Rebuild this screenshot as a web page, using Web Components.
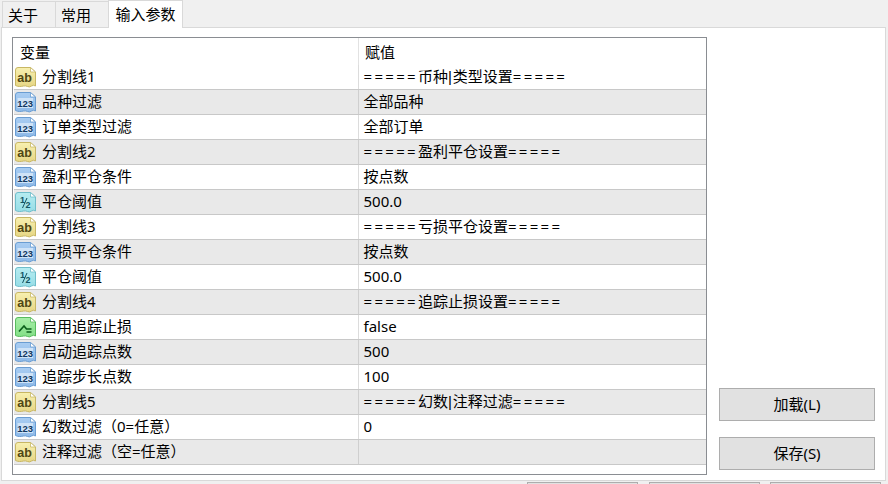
<!DOCTYPE html>
<html lang="zh"><head><meta charset="utf-8">
<style>
html,body{margin:0;padding:0;background:#f0f0f0;overflow:hidden;width:888px;height:484px}
body{font:15px "Noto Sans","Noto Sans CJK SC",sans-serif;color:#000}
</style></head><body>
<param-dialog>
<tab-bar slot="tabs">
<tab-item>关于</tab-item><tab-item>常用</tab-item><tab-item active>输入参数</tab-item>
</tab-bar>
<param-list slot="list">
<param-row kind="ab" name="分割线1" value="=====币种|类型设置====="></param-row>
<param-row kind="num" name="品种过滤" value="全部品种"></param-row>
<param-row kind="num" name="订单类型过滤" value="全部订单"></param-row>
<param-row kind="ab" name="分割线2" value="=====盈利平仓设置====="></param-row>
<param-row kind="num" name="盈利平仓条件" value="按点数"></param-row>
<param-row kind="half" name="平仓阈值" value="500.0"></param-row>
<param-row kind="ab" name="分割线3" value="=====亏损平仓设置====="></param-row>
<param-row kind="num" name="亏损平仓条件" value="按点数"></param-row>
<param-row kind="half" name="平仓阈值" value="500.0"></param-row>
<param-row kind="ab" name="分割线4" value="=====追踪止损设置====="></param-row>
<param-row kind="bool" name="启用追踪止损" value="false"></param-row>
<param-row kind="num" name="启动追踪点数" value="500"></param-row>
<param-row kind="num" name="追踪步长点数" value="100"></param-row>
<param-row kind="ab" name="分割线5" value="=====幻数|注释过滤====="></param-row>
<param-row kind="num" name="幻数过滤（0=任意）" value="0"></param-row>
<param-row kind="ab" name="注释过滤（空=任意）" value=""></param-row>
</param-list>
<ui-button slot="side">加载(L)</ui-button>
<ui-button slot="side">保存(S)</ui-button>
<ui-button slot="foot"></ui-button><ui-button slot="foot"></ui-button><ui-button slot="foot"></ui-button>
</param-dialog>
<script>
function shadow(el,html){el.attachShadow({mode:'open'}).innerHTML=html;}
customElements.define('param-dialog',class extends HTMLElement{constructor(){super();shadow(this,`<style>
:host{display:block;width:888px;height:484px;overflow:hidden}
.tabs{height:27px}
.panel{box-sizing:border-box;width:885px;height:454px;margin-left:1px;background:#fff;border:1px solid #d9d9d9;padding:9px 10px 0 10px;display:flex;gap:12px}
.side{display:flex;flex-direction:column;gap:16px;padding-top:351px}
.foot{display:flex;gap:10.5px;padding:1px 0 0 527px}
</style><div class="tabs"><slot name="tabs"></slot></div>
<div class="panel"><slot name="list"></slot><div class="side"><slot name="side"></slot></div></div>
<div class="foot"><slot name="foot"></slot></div>`);}});
customElements.define('tab-bar',class extends HTMLElement{constructor(){super();shadow(this,`<style>
:host{display:flex;height:27px;padding-left:2px;box-sizing:border-box;position:relative;z-index:1}
</style><slot></slot>`);}});
customElements.define('tab-item',class extends HTMLElement{constructor(){super();shadow(this,`<style>
:host{display:block;box-sizing:border-box;height:26px;margin-top:1px;padding:0 5px;width:54px;line-height:26px;background:#f0f0f0;border:1px solid #d9d9d9;border-bottom:0;margin-right:-1px}
:host([active]){width:75px;height:28px;margin-top:0;padding:0 6.5px;background:#fff;line-height:26px;position:relative}
</style><slot></slot>`);}});
customElements.define('param-list',class extends HTMLElement{constructor(){super();shadow(this,`<style>
:host{display:block;box-sizing:border-box;width:695px;height:438px;border:1px solid #8a8d92;background:#fff;padding-left:1px}
.head{display:grid;grid-template-columns:344px 1fr;height:27px;line-height:28px}
.head div{padding-left:6px}
.head div+div{border-left:1px solid #e2e2e2;padding-left:6px}
</style><div class="head"><div>变量</div><div>赋值</div></div><slot></slot>`);}});
let uid=0;
const doc=(c1,c2,edge)=>{const id='g'+(++uid);return `<defs><linearGradient id="${id}" x1="0" y1="0" x2="0" y2="1"><stop offset="0" stop-color="${c1}"/><stop offset="1" stop-color="${c2}"/></linearGradient></defs><path d="M.5 3Q.5 .5 3 .5H15.5L20.5 5V19Q18.5 17.5 16.5 19T12.5 19.5T8.5 19T4.5 19.5T.5 18.5Z" fill="url(#${id})" stroke="${edge}"/><path d="M15.5 .5V5H20.5Z" fill="#fff" stroke="${edge}" stroke-width=".8"/>`;};
const lab=(t,c,s,y)=>`<text x="9.5" y="${y}" text-anchor="middle" font-family="Liberation Sans,sans-serif" font-weight="700" font-size="${s}" fill="${c}">${t}</text>`;
const iconFor=k=>({
 ab:()=>doc('#f8f0b0','#e6d684','#c8b764')+lab('ab','#4f4714',12.5,14.5),
 num:()=>doc('#a9cdf2','#8db9e8','#6a9dd2')+`<rect x="2.5" y="6" width="15.5" height="10" fill="#cfe3f7"/>`+lab('123','#12375f',9.5,14.5).replace('x="9.5"','x="10.2"'),
 half:()=>doc('#b6ecf1','#96dde6','#6fbdca')+`<text x="5" y="11" font-family="Liberation Sans,sans-serif" font-weight="700" font-size="9" fill="#135463">1</text><path d="M7.5 16L12 6" stroke="#135463" stroke-width="1"/><text x="10.5" y="16" font-family="Liberation Sans,sans-serif" font-weight="700" font-size="9" fill="#135463">2</text>`,
 bool:()=>doc('#a8eea8','#82df86','#58bb5e')+`<path d="M4 14.5L9 9L11.5 12H16.5" fill="none" stroke="#0c5f1c" stroke-width="1.7"/><path d="M11.5 15H16.5" stroke="#0c5f1c" stroke-width="1.5"/>`
}[k]());
const fmt=v=>v.replace(/=+/g,m=>`<span class="eq">${m}</span>`).replace(/\|/g,'<span class="bar">|</span>');
customElements.define('param-row',class extends HTMLElement{connectedCallback(){if(this.shadowRoot)return;shadow(this,`<style>
:host{display:grid;grid-template-columns:344px 1fr;height:25px;box-sizing:border-box;border-bottom:1px solid #c8c8c8;line-height:23px;background:#fff}
:host(:nth-child(even)){background:#e9e9e9}
.n{display:flex;align-items:center;gap:6px;padding-left:1px;white-space:nowrap}
.n span{margin-top:-2px}
svg{width:21px;height:21px;flex:none}
.v{border-left:1px solid #dcdcdc;padding-left:4.5px;white-space:pre}
.eq{letter-spacing:2.3px}
.bar{font-family:"Liberation Sans",sans-serif;margin-right:1px}
:host(:nth-child(even)) .v{border-left-color:#cfcfcf}
</style><div class="n"><svg viewBox="0 0 21 21">${iconFor(this.getAttribute('kind'))}</svg><span>${this.getAttribute('name')}</span></div><div class="v">${fmt(this.getAttribute('value'))}</div>`);}});
customElements.define('ui-button',class extends HTMLElement{constructor(){super();shadow(this,`<style>
:host{display:flex;align-items:center;justify-content:center;box-sizing:border-box;width:156px;height:33px;padding-bottom:2px;background:#e1e1e1;border:1px solid #adadad}
:host([slot=foot]){width:111px;height:20px}
</style><slot></slot>`);}});
</script>
</body></html>
